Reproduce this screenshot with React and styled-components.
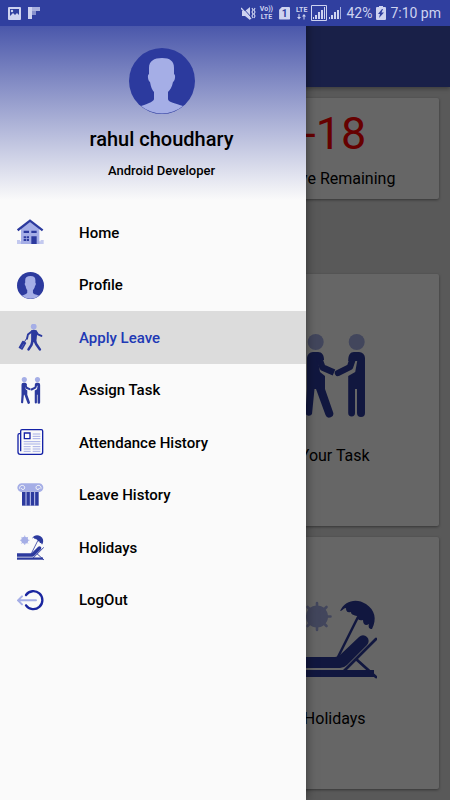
import React from 'react';
import styled, { createGlobalStyle } from 'styled-components';

const palette = {
  primary: '#3f51b5',
  dark: '#303f9f',
  icon: '#2c3a9e',
  light: '#a5aee6',
  status: '#ced3f0',
  page: '#dedede',
  drawer: '#fafafa',
};

const GlobalStyle = createGlobalStyle`
  * {
    box-sizing: border-box;
  }

  body {
    margin: 0;
    background: ${palette.page};
    font-family: Roboto, sans-serif;
    color: #000;
  }
`;

const Screen = styled.div`
  position: relative;
  min-height: 100vh;
  display: flex;
  flex-direction: column;
  overflow: hidden;
`;

const StatusBar = styled.div`
  position: relative;
  z-index: 3;
  display: flex;
  align-items: center;
  justify-content: space-between;
  height: 26px;
  padding: 0 9px 0 8px;
  background: ${palette.dark};
  color: ${palette.status};
  font-size: 14px;
  line-height: 26px;
`;

const StatusGroup = styled.div`
  display: flex;
  align-items: center;
  gap: ${({ $gap }) => $gap}px;
`;

const Stack = styled.span`
  display: flex;
  flex-direction: column;
  align-items: center;
  font-size: 7px;
  font-weight: 700;
  line-height: 8px;
`;

const Sim = styled.span`
  width: 11px;
  height: 13px;
  margin: 0 2px;
  background: ${palette.status};
  border-radius: 1px;
  clip-path: polygon(30% 0, 100% 0, 100% 100%, 0 100%, 0 25%);
  color: ${palette.dark};
  font-size: 10px;
  font-weight: 700;
  line-height: 14px;
  text-align: center;
`;

const AppBar = styled.header`
  height: 61px;
  background: ${palette.primary};
  box-shadow: 0 2px 4px rgba(0, 0, 0, 0.3);
`;

const Content = styled.main`
  flex: 1;
  display: flex;
  flex-direction: column;
  gap: 75px;
  padding: 11px;
`;

const CardGrid = styled.section`
  display: grid;
  grid-template-columns: 1fr 1fr;
  gap: 11px;
`;

const Card = styled.article`
  display: flex;
  flex-direction: column;
  align-items: center;
  gap: ${({ $tall }) => ($tall ? 28 : 9)}px;
  padding: ${({ $tall }) => ($tall ? 60 : 10)}px 8px;
  background: #fff;
  border-radius: 2px;
  box-shadow: 0 1px 3px rgba(0, 0, 0, 0.4);
`;

const Count = styled.div`
  color: #f00;
  font-size: 45px;
  line-height: 52px;
`;

const CardLabel = styled.div`
  font-size: 16px;
  line-height: 20px;
`;

const Scrim = styled.div`
  position: absolute;
  inset: 0;
  z-index: 1;
  background: rgba(0, 0, 0, 0.6);
`;

const Drawer = styled.aside`
  position: absolute;
  top: 0;
  bottom: 0;
  left: 0;
  z-index: 2;
  width: 68%;
  background: ${palette.drawer};
  box-shadow: 0 0 10px rgba(0, 0, 0, 0.5);
`;

const DrawerHeader = styled.div`
  display: flex;
  flex-direction: column;
  align-items: center;
  height: 200px;
  padding: 48px 0 0 17px;
  background: linear-gradient(${palette.dark}, ${palette.drawer});
`;

const Name = styled.div`
  margin-top: 12px;
  font-size: 20px;
  font-weight: 500;
  line-height: 26px;
`;

const Role = styled.div`
  margin-top: 9px;
  font-size: 13px;
  font-weight: 500;
  line-height: 20px;
`;

const Menu = styled.nav`
  display: grid;
  grid-auto-rows: 1fr;
  height: 420px;
  margin-top: 6px;
`;

const MenuItem = styled.a`
  display: flex;
  align-items: center;
  gap: 35px;
  padding: 1px 0 0 17px;
  background: ${({ $active }) => ($active ? '#dcdcdc' : 'transparent')};
  color: ${({ $active }) => ($active ? '#2139b5' : '#000')};
  font-size: 15px;
  font-weight: 500;
  text-decoration: none;
`;

const Icon = styled.svg`
  display: block;
  flex: none;
  width: ${({ $size }) => $size}px;
  height: ${({ $size }) => $size}px;
`;

const AvatarIcon = ({ size = 27 }) => (
  <Icon $size={size} viewBox="0 0 66 66">
    <circle cx="33" cy="33" r="33" fill={palette.icon} />
    <path
      fill={palette.light}
      d="M33 10c8 0 12 3 12 10v6c2 1 1 7-1 8-1 5-3 8-5 10v7c0 3 6 4 15 7A33 33 0 0 1 12 58c9-3 13-5 13-7v-7c-2-2-3-5-4-10-2-1-3-7-1-8v-6c0-7 5-10 13-10z"
    />
  </Icon>
);

const HomeIcon = () => (
  <Icon $size={27} viewBox="0 0 81 81">
    <path fill="#c3c9ef" d="M0 63h9v4h62v-4h9v12H0z" />
    <path fill={palette.light} d="M12 29 39 7l28 22v46H12z" />
    <path fill="none" stroke={palette.icon} strokeWidth="7" d="M2 34 39 5l38 29" />
    <path
      fill={palette.icon}
      d="M20 35h16v7H20zM43 35h16v7H43zM43 52h16v23H43zM20 52h7v6h-7zM29 52h7v6h-7zM20 60h7v6h-7zM29 60h7v6h-7z"
    />
  </Icon>
);

const TravelIcon = () => (
  <Icon $size={27} viewBox="0 0 84 84">
    <circle cx="52" cy="8" r="9" fill={palette.light} />
    <path fill={palette.icon} d="M44 20q8-4 17 0l2 9-3 27H44z" />
    <g fill="none" stroke={palette.icon} strokeLinecap="round" strokeLinejoin="round">
      <path strokeWidth="6" d="m59 23 6 9 11 5M46 23 34 33l-3 13" />
      <path strokeWidth="8" d="m56 54 4 9 11 16M48 54l-3 11-9 14" />
      <path strokeWidth="3" d="m29 46-6 10" />
    </g>
    <rect x="10" y="53" width="14" height="26" rx="2" fill={palette.icon} transform="rotate(30 17 66)" />
    <path stroke={palette.light} strokeWidth="1" d="m21 62-8 14" />
  </Icon>
);

const TaskIcon = ({ size = 27 }) => (
  <Icon $size={size} viewBox="0 0 84 84">
    <g fill={palette.light}>
      <circle cx="22.7" cy="8" r="8" />
      <circle cx="63.7" cy="8" r="8" />
    </g>
    <g fill={palette.icon}>
      <path d="M61 18h5a6 6 0 0 1 6 6v55a4 4 0 0 1-8 0V55h-2v24a3.4 3.4 0 0 1-6.8 0V42l7-4 2-11h-9c0-6 2-9 5.8-9z" />
      <path d="M20 18h5c4 0 6 3 6 8l-6 1 2 11 5 4v13l8 23a4 4 0 0 1-7.5 3L23 55h-1.5L19 80a3.5 3.5 0 0 1-6.5-1L14 55V24a6 6 0 0 1 6-6z" />
    </g>
    <g fill="none" stroke={palette.icon} strokeWidth="6.4" strokeLinejoin="round">
      <path strokeLinecap="round" d="m60 24-3 9-12 6" />
      <path d="m26 24 3.5 9.500L41 38.500" />
    </g>
  </Icon>
);

const NewsIcon = () => (
  <Icon $size={27} viewBox="0 0 81 81">
    <g fill="none" stroke="#1421a6" strokeWidth="4">
      <path d="M11 14H7q-4 0-4 5v50q0 7 7 7h61q6 0 6-6V6q0-4-4-4H15q-4 0-4 4v61" />
      <path d="M22 12h17v17H22z" />
    </g>
    <path
      stroke={palette.light}
      strokeWidth="3"
      d="M47 15h23M47 22h23M47 29h23M20 38h50M20 45h50M20 53h21M47 53h23M20 60h21M47 60h23M20 67h21M47 67h23"
    />
  </Icon>
);

const ColumnIcon = () => (
  <Icon $size={27} viewBox="0 0 81 81">
    <path fill={palette.icon} d="M15 29h50v42H15z" />
    <path stroke="#c3c9ef" strokeWidth="3" d="M27 30v41M40 30v41M53 30v41" />
    <path fill={palette.light} d="M13 4h54a13 13 0 1 1-8 24H21A13 13 0 1 1 13 4z" />
    <path
      fill="none"
      stroke={palette.drawer}
      strokeWidth="3"
      d="M8 20c-2-12 15-13 15-3 0 7-10 7-10 1M72 20c2-12-15-13-15-3 0 7 10 7 10 1"
    />
  </Icon>
);

const HolidayIcon = ({ size = 27 }) => (
  <Icon $size={size} viewBox="0 0 84 84">
    <circle cx="24" cy="19.5" r="11" fill={palette.light} />
    <path
      stroke={palette.light}
      strokeWidth="2.6"
      strokeLinecap="round"
      d="M24 6v27M10.5 19.5h27M14.5 10l19 19M33.5 10l-19 19"
    />
    <path
      fill={palette.icon}
      d="M47 14C52 3 64 1 73 7c9 6 11 15 6 25-3 0-4-2-3-5-3 2-6 1-6-4-3 1-6 0-6-4-3-1-6-1-6-4-4 1-5-1-5-4-3 0-3 3-6 3z"
    />
    <path stroke={palette.icon} strokeWidth="2.5" d="M65 20 44 62" />
    <path fill={palette.icon} d="M0 60h42q3 0 5-2l19-18a5.5 5.5 0 0 1 8 8L54 68q-3 3-7 3H0z" />
    <path fill={palette.icon} d="M0 73h81v7H0z" />
    <path
      stroke={palette.icon}
      strokeWidth="2.8"
      strokeLinecap="round"
      d="M83 42 51 74M63 62l20 18"
    />
  </Icon>
);

const LogoutIcon = () => (
  <Icon $size={27} viewBox="0 0 81 81">
    <path fill="none" stroke="#1a269f" strokeWidth="7" strokeLinecap="round" d="M27 24a27 27 0 1 1 0 31" />
    <path
      fill="none"
      stroke={palette.light}
      strokeWidth="6"
      strokeLinecap="round"
      strokeLinejoin="round"
      d="M57 40H4M15 28 3 40l12 12"
    />
  </Icon>
);

const PictureGlyph = () => (
  <svg width="13" height="13" viewBox="0 0 13 13">
    <rect width="13" height="13" rx="1" fill={palette.status} />
    <path fill={palette.dark} d="M2 2h9v6L9 6 7 8 5 6 2 9z" />
    <circle cx="4" cy="4" r="1.2" fill={palette.status} />
  </svg>
);

const FlipGlyph = () => (
  <svg width="12" height="12" viewBox="0 0 12 12">
    <path fill="#ced3f0" d="M0 0h4v12H0z" />
    <path fill="#a9b1de" d="M4 0h8v4H4z" />
    <path fill="#8791cc" d="M4 4h4v4H4z" />
  </svg>
);

const MuteGlyph = () => (
  <svg width="15" height="13" viewBox="0 0 15 13">
    <path fill={palette.status} d="M1 4h3l5-4v13L4 9H1z" />
    <path stroke={palette.dark} strokeWidth="1" d="m1 0 10 11" />
    <path stroke={palette.status} strokeWidth="1.3" d="m0 1 10 11" />
    <path fill="none" stroke={palette.status} strokeWidth="1.1" d="m11 1 1 2-1 2 1 2-1 2 1 2M14 1l-1 2 1 2-1 2 1 2-1 2" />
  </svg>
);

const ArrowsGlyph = () => (
  <svg width="9" height="6" viewBox="0 0 9 6">
    <path fill={palette.status} d="M1.5 0h1v3H4L2 5.500 0 3h1.500zM6.500 5.500h1v-3H9L7 0 5 2.500h1.500z" />
  </svg>
);

const SignalGlyph = ({ boxed }) => (
  <svg width={boxed ? 16 : 14} height="16" viewBox={boxed ? '0 0 16 16' : '1 0 14 16'}>
    {boxed && <path fill="none" stroke={palette.status} d="M.5.5h15v15H.5z" />}
    <path fill={palette.status} d="M2 12h1v2H2zM4 10h2v4H4zM7 7h2v7H7zM10 5h2v9h-2z" />
    <path fill={boxed ? palette.status : '#a9b1de'} d="M13 2h1v12h-1z" />
  </svg>
);

const BatteryGlyph = () => (
  <svg width="10" height="14" viewBox="0 0 10 14">
    <path fill={palette.status} d="M3 0h4v1h2q1 0 1 1v11q0 1-1 1H1q-1 0-1-1V2q0-1 1-1h2z" />
    <path fill={palette.dark} d="M6 3 2 8h2l-1 4 5-5.500H5.500L7 3z" />
  </svg>
);

const menu = [
  { label: 'Home', icon: HomeIcon },
  { label: 'Profile', icon: AvatarIcon },
  { label: 'Apply Leave', icon: TravelIcon, active: true },
  { label: 'Assign Task', icon: TaskIcon },
  { label: 'Attendance History', icon: NewsIcon },
  { label: 'Leave History', icon: ColumnIcon },
  { label: 'Holidays', icon: HolidayIcon },
  { label: 'LogOut', icon: LogoutIcon },
];

const App = () => {
  return (
    <Screen>
      <GlobalStyle />
      <StatusBar>
        <StatusGroup $gap={7}>
          <PictureGlyph />
          <FlipGlyph />
        </StatusGroup>
        <StatusGroup $gap={4}>
          <MuteGlyph />
          <Stack>
            <span>Vo))</span>
            <span>LTE</span>
          </Stack>
          <Sim>1</Sim>
          <Stack>
            <span>LTE</span>
            <ArrowsGlyph />
          </Stack>
          <StatusGroup $gap={1}>
            <SignalGlyph boxed />
            <SignalGlyph />
          </StatusGroup>
          <span>42%</span>
          <BatteryGlyph />
          <span>7:10 pm</span>
        </StatusGroup>
      </StatusBar>
      <AppBar />
      <Content>
        <CardGrid>
          <Card />
          <Card>
            <Count>-18</Count>
            <CardLabel>Leave Remaining</CardLabel>
          </Card>
        </CardGrid>
        <CardGrid>
          <Card $tall />
          <Card $tall>
            <TaskIcon size={84} />
            <CardLabel>Your Task</CardLabel>
          </Card>
          <Card $tall />
          <Card $tall>
            <HolidayIcon size={84} />
            <CardLabel>Holidays</CardLabel>
          </Card>
        </CardGrid>
      </Content>
      <Scrim />
      <Drawer>
        <DrawerHeader>
          <AvatarIcon size={66} />
          <Name>rahul choudhary</Name>
          <Role>Android Developer</Role>
        </DrawerHeader>
        <Menu>
          {menu.map(({ label, icon: ItemIcon, active }) => (
            <MenuItem key={label} href="#" $active={active}>
              <ItemIcon />
              {label}
            </MenuItem>
          ))}
        </Menu>
      </Drawer>
    </Screen>
  );
};

export default App;
